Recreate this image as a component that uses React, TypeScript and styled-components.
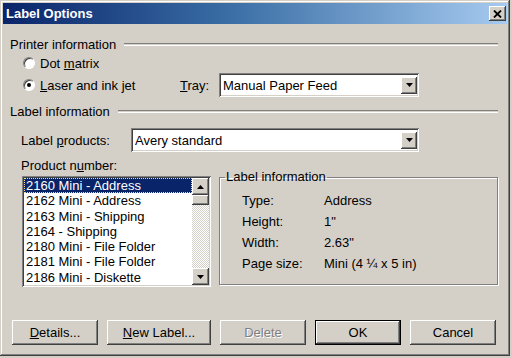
import React from 'react';
import styled, { createGlobalStyle } from 'styled-components';

const GlobalStyle = createGlobalStyle`
  html, body {
    margin: 0;
    padding: 0;
    background: #d4d0c8;
  }
  body {
    font-family: "Liberation Sans", Arial, sans-serif;
    font-size: 13px;
    color: #000;
  }
`;

const raised = `
  box-shadow: inset -1px -1px #404040, inset 1px 1px #ffffff,
    inset -2px -2px #808080, inset 2px 2px #d4d0c8;
`;

const sunken = `
  box-shadow: inset 1px 1px #808080, inset -1px -1px #ffffff,
    inset 2px 2px #404040, inset -2px -2px #d4d0c8;
`;

const Window = styled.div`
  box-sizing: border-box;
  width: 510px;
  height: 356px;
  padding: 3px;
  display: flex;
  flex-direction: column;
  background: #d4d0c8;
  box-shadow: inset -1px -1px #404040, inset 1px 1px #d4d0c8,
    inset -2px -2px #808080, inset 2px 2px #ffffff;
`;

const TitleBar = styled.div`
  height: 21px;
  display: flex;
  align-items: center;
  padding-left: 3px;
  background: linear-gradient(90deg, #0a246a 0%, #3a6ea5 45%, #a6caf0 100%);
  color: #fff;
  font-weight: bold;
  font-size: 13px;
`;

const TitleText = styled.div`
  flex: 1;
`;

const CloseBtn = styled.div`
  width: 17px;
  height: 15px;
  margin-right: 1px;
  display: flex;
  align-items: center;
  justify-content: center;
  background: #d4d0c8;
  ${raised}
`;

const Body = styled.div`
  flex: 1;
  display: flex;
  flex-direction: column;
  padding: 0 9px 0 7px;
`;

const Heading = styled.div<{ top: number }>`
  display: flex;
  align-items: center;
  height: 16px;
  margin-top: ${(p) => p.top}px;
  &::after {
    content: '';
    flex: 1;
    margin-left: 8px;
    height: 1px;
    border-top: 1px solid #808080;
    border-bottom: 1px solid #ffffff;
  }
`;

const Row = styled.div<{ top: number; indent: number; h?: number }>`
  display: flex;
  align-items: center;
  height: ${(p) => p.h || 16}px;
  margin-top: ${(p) => p.top}px;
  margin-left: ${(p) => p.indent}px;
`;

const RadioOption = styled.label<{ w?: number }>`
  display: flex;
  align-items: center;
  gap: 5px;
  width: ${(p) => (p.w ? p.w + 'px' : 'auto')};
`;

const RadioCircle = styled.span<{ checked?: boolean }>`
  position: relative;
  box-sizing: border-box;
  width: 12px;
  height: 12px;
  border-radius: 50%;
  background: #fff;
  border: 1px solid;
  border-color: #808080 #ffffff #ffffff #808080;
  box-shadow: inset 1px 1px #404040;
  &::after {
    content: '';
    display: ${(p) => (p.checked ? 'block' : 'none')};
    position: absolute;
    left: 3px;
    top: 3px;
    width: 4px;
    height: 4px;
    border-radius: 50%;
    background: #000;
  }
`;

const FieldLabel = styled.span<{ w: number }>`
  width: ${(p) => p.w}px;
`;

const Combo = styled.div<{ w: number }>`
  box-sizing: border-box;
  width: ${(p) => p.w}px;
  height: 24px;
  padding: 2px;
  display: flex;
  align-items: center;
  background: #fff;
  ${sunken}
`;

const ComboText = styled.div`
  flex: 1;
  padding-left: 2px;
`;

const ArrowBtn = styled.div<{ h?: number }>`
  width: 16px;
  height: ${(p) => p.h || 17}px;
  flex: none;
  display: flex;
  align-items: center;
  justify-content: center;
  background: #d4d0c8;
  ${raised}
`;

const Lower = styled.div`
  display: flex;
  align-items: flex-start;
  margin-top: 6px;
  margin-left: 11px;
`;

const LeftCol = styled.div`
  display: flex;
  flex-direction: column;
`;

const ListBox = styled.div`
  box-sizing: border-box;
  width: 189px;
  height: 111px;
  margin: 2px 0 0 1px;
  padding: 2px;
  display: flex;
  background: #fff;
  ${sunken}
`;

const Items = styled.div`
  flex: 1;
  display: flex;
  flex-direction: column;
`;

const Item = styled.div<{ selected?: boolean }>`
  box-sizing: border-box;
  height: 15.28px;
  line-height: 15px;
  padding-left: 2px;
  white-space: nowrap;
  background: ${(p) => (p.selected ? '#0a246a' : 'transparent')};
  color: ${(p) => (p.selected ? '#fff' : '#000')};
  outline: ${(p) => (p.selected ? '1px dotted #ffe08a' : 'none')};
  outline-offset: -1px;
`;

const ScrollBar = styled.div`
  width: 17px;
  display: flex;
  flex-direction: column;
  background: repeating-conic-gradient(#ffffff 0 25%, #d4d0c8 0 50%) 0 0 / 2px 2px;
`;

const ScrollBtn = styled(ArrowBtn)`
  width: 17px;
`;

const Thumb = styled.div`
  height: 10px;
  background: #d4d0c8;
  ${raised}
`;

const Track = styled.div`
  flex: 1;
`;

const Group = styled.fieldset`
  box-sizing: border-box;
  flex: 1;
  height: 116px;
  margin: 11px 0 0 8px;
  padding: 0;
  border: 1px solid #808080;
  box-shadow: inset 1px 1px #ffffff, 1px 1px #ffffff;
  min-inline-size: 0;
`;

const Legend = styled.legend`
  margin-left: 5px;
  padding: 0 1px;
  line-height: 16px;
`;

const InfoGrid = styled.div`
  display: grid;
  grid-template-columns: 82px auto;
  row-gap: 5px;
  padding: 8px 0 0 22px;
  line-height: 16px;
`;

const ButtonRow = styled.div`
  display: flex;
  gap: 9px;
  margin: 33px 0 0 2px;
`;

const Button = styled.div<{ w: number; isDefault?: boolean; disabled?: boolean }>`
  box-sizing: border-box;
  width: ${(p) => p.w}px;
  height: 25px;
  display: flex;
  align-items: center;
  justify-content: center;
  background: #d4d0c8;
  color: ${(p) => (p.disabled ? '#808080' : '#000')};
  text-shadow: ${(p) => (p.disabled ? '1px 1px #ffffff' : 'none')};
  box-shadow: ${(p) =>
    p.isDefault
      ? 'inset 0 0 0 1px #000, inset -2px -2px #404040, inset 2px 2px #ffffff, inset -3px -3px #808080'
      : 'inset -1px -1px #404040, inset 1px 1px #ffffff, inset -2px -2px #808080, inset 2px 2px #d4d0c8'};
`;

const U = styled.span`
  text-decoration: underline;
`;

const Triangle = ({ up }: { up?: boolean }) => (
  <svg width="7" height="4" viewBox="0 0 7 4">
    <polygon points={up ? '0,4 7,4 3.5,0' : '0,0 7,0 3.5,4'} fill="#000" />
  </svg>
);

const products = [
  '2160 Mini - Address',
  '2162 Mini - Address',
  '2163 Mini - Shipping',
  '2164 - Shipping',
  '2180 Mini - File Folder',
  '2181 Mini - File Folder',
  '2186 Mini - Diskette',
];

const info = [
  ['Type:', 'Address'],
  ['Height:', '1"'],
  ['Width:', '2.63"'],
  ['Page size:', 'Mini (4 ¼ x 5 in)'],
];

export default function App() {
  return (
    <>
      <GlobalStyle />
      <Window>
        <TitleBar>
          <TitleText>Label Options</TitleText>
          <CloseBtn>
            <svg width="9" height="8" viewBox="0 0 9 8">
              <path d="M1 0.5 L8 7.5 M8 0.5 L1 7.5" stroke="#000" strokeWidth="1.8" />
            </svg>
          </CloseBtn>
        </TitleBar>
        <Body>
          <Heading top={12}>Printer information</Heading>
          <Row top={3} indent={13}>
            <RadioOption>
              <RadioCircle />
              <span>Dot <U>m</U>atrix</span>
            </RadioOption>
          </Row>
          <Row top={2} indent={13} h={24}>
            <RadioOption w={157}>
              <RadioCircle checked />
              <span><U>L</U>aser and ink jet</span>
            </RadioOption>
            <FieldLabel w={39}><U>T</U>ray:</FieldLabel>
            <Combo w={200}>
              <ComboText>Manual Paper Feed</ComboText>
              <ArrowBtn><Triangle /></ArrowBtn>
            </Combo>
          </Row>
          <Heading top={6}>Label information</Heading>
          <Row top={9} indent={11} h={24}>
            <FieldLabel w={110}>Label <U>p</U>roducts:</FieldLabel>
            <Combo w={288}>
              <ComboText>Avery standard</ComboText>
              <ArrowBtn><Triangle /></ArrowBtn>
            </Combo>
          </Row>
          <Lower>
            <LeftCol>
              <span style={{ lineHeight: '16px' }}>Product n<U>u</U>mber:</span>
              <ListBox>
                <Items>
                  {products.map((p, i) => (
                    <Item key={p} selected={i === 0}>{p}</Item>
                  ))}
                </Items>
                <ScrollBar>
                  <ScrollBtn><Triangle up /></ScrollBtn>
                  <Thumb />
                  <Track />
                  <ScrollBtn><Triangle /></ScrollBtn>
                </ScrollBar>
              </ListBox>
            </LeftCol>
            <Group>
              <Legend>Label information</Legend>
              <InfoGrid>
                {info.map(([k, v]) => (
                  <React.Fragment key={k}>
                    <span>{k}</span>
                    <span>{v}</span>
                  </React.Fragment>
                ))}
              </InfoGrid>
            </Group>
          </Lower>
          <ButtonRow>
            <Button w={86}><span><U>D</U>etails...</span></Button>
            <Button w={104}><span><U>N</U>ew Label...</span></Button>
            <Button w={86} disabled>Delete</Button>
            <Button w={86} isDefault>OK</Button>
            <Button w={86}>Cancel</Button>
          </ButtonRow>
        </Body>
      </Window>
    </>
  );
}
